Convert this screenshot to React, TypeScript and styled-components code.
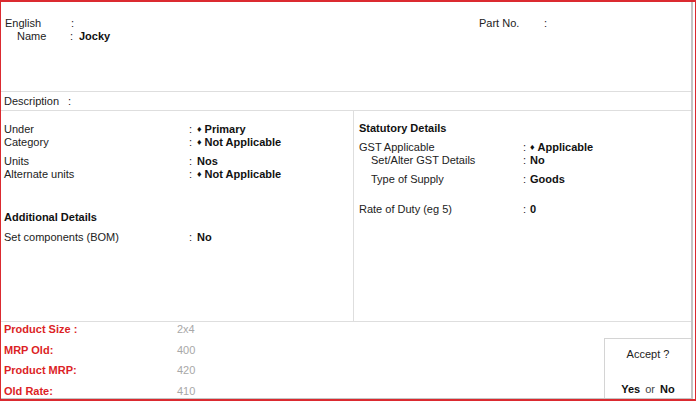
import React from "react";
import styled, { createGlobalStyle } from "styled-components";

const GlobalStyle = createGlobalStyle`
  html, body {
    margin: 0;
    padding: 0;
    background: #ffffff;
  }
  body {
    font-family: "Liberation Sans", Arial, sans-serif;
    font-size: 11px;
    color: #222;
  }
`;

const Frame = styled.div`
  width: 696px;
  height: 401px;
  box-sizing: border-box;
  border-top: 2px solid #db2a30;
  border-left: 1px solid #db2a30;
  border-right: 1px solid #db2a30;
  border-bottom: 2px solid #db2a30;
  display: flex;
  background: #fff;
`;

const Screen = styled.div`
  flex: 1;
  display: flex;
  flex-direction: column;
  border-right: 2px solid #c4c4c4;
  border-bottom: 1px solid #c4c4c4;
  margin-right: 2px;
`;

const Header = styled.div`
  height: 90px;
  box-sizing: border-box;
  padding: 15px 0 0 4px;
  border-bottom: 1px solid #dedede;
  display: flex;
`;

const HeaderLeft = styled.div`
  width: 474px;
  display: flex;
  flex-direction: column;
`;

const Line = styled.div<{ $indent?: number; $top?: number }>`
  display: flex;
  align-items: center;
  height: 13px;
  line-height: 13px;
  padding-left: ${(p) => p.$indent ?? 0}px;
  margin-top: ${(p) => p.$top ?? 0}px;
  white-space: nowrap;
`;

const Label = styled.span<{ $w: number }>`
  width: ${(p) => p.$w}px;
  flex-shrink: 0;
`;

const Colon = styled.span<{ $w?: number }>`
  width: ${(p) => p.$w ?? 8}px;
  flex-shrink: 0;
`;

const Value = styled.span`
  font-weight: bold;
  color: #111;
`;

const Diamond = styled.span`
  font-size: 9px;
  margin-right: 3px;
  position: relative;
  top: -1px;
`;

const DescRow = styled.div`
  height: 19px;
  box-sizing: border-box;
  padding: 3px 0 0 3px;
  border-bottom: 1px solid #dedede;
  display: flex;
`;

const Columns = styled.div`
  height: 210px;
  display: flex;
  border-bottom: 1px solid #dedede;
`;

const LeftCol = styled.div`
  width: 353px;
  box-sizing: border-box;
  padding: 12px 0 0 3px;
  border-right: 1px solid #dedede;
  display: flex;
  flex-direction: column;
`;

const RightCol = styled.div`
  flex: 1;
  padding: 11px 0 0 5px;
  display: flex;
  flex-direction: column;
`;

const SectionTitle = styled.div<{ $top?: number }>`
  font-weight: bold;
  height: 13px;
  line-height: 13px;
  margin-top: ${(p) => p.$top ?? 0}px;
  color: #111;
`;

const Bottom = styled.div`
  flex: 1;
  display: flex;
  justify-content: space-between;
`;

const ExtraList = styled.div`
  padding: 1px 0 0 3px;
  display: flex;
  flex-direction: column;
  gap: 7.6px;
`;

const ExtraRow = styled.div`
  display: flex;
  height: 13px;
  line-height: 13px;
`;

const ExtraLabel = styled.span`
  width: 173px;
  color: #dc1f26;
  font-weight: bold;
`;

const ExtraValue = styled.span`
  color: #a8a8a8;
`;

const AcceptBox = styled.div`
  align-self: flex-end;
  width: 87px;
  height: 60px;
  box-sizing: border-box;
  border-top: 1px solid #d4d4d4;
  border-left: 1px solid #d4d4d4;
  display: flex;
  flex-direction: column;
  align-items: center;
  justify-content: space-between;
  padding: 9px 0 3px;
  color: #222;
`;

const Choice = styled.div`
  word-spacing: 2px;
  b {
    color: #111;
  }
  span {
    color: #444;
  }
`;

const extras = [
  { label: "Product Size :", value: "2x4" },
  { label: "MRP Old:", value: "400" },
  { label: "Product MRP:", value: "420" },
  { label: "Old Rate:", value: "410" },
];

export default function App() {
  return (
    <>
      <GlobalStyle />
      <Frame>
        <Screen>
          <Header>
            <HeaderLeft>
              <Line>
                <Label $w={66}>English</Label>
                <Colon>:</Colon>
              </Line>
              <Line $indent={12}>
                <Label $w={53}>Name</Label>
                <Colon $w={9}>:</Colon>
                <Value>Jocky</Value>
              </Line>
            </HeaderLeft>
            <Line>
              <Label $w={65}>Part No.</Label>
              <Colon>:</Colon>
            </Line>
          </Header>

          <DescRow>
            <Line>
              <Label $w={64}>Description</Label>
              <Colon>:</Colon>
            </Line>
          </DescRow>

          <Columns>
            <LeftCol>
              <Line>
                <Label $w={185}>Under</Label>
                <Colon>:</Colon>
                <Value><Diamond>♦</Diamond>Primary</Value>
              </Line>
              <Line>
                <Label $w={185}>Category</Label>
                <Colon>:</Colon>
                <Value><Diamond>♦</Diamond>Not Applicable</Value>
              </Line>
              <Line $top={6}>
                <Label $w={185}>Units</Label>
                <Colon>:</Colon>
                <Value>Nos</Value>
              </Line>
              <Line>
                <Label $w={185}>Alternate units</Label>
                <Colon>:</Colon>
                <Value><Diamond>♦</Diamond>Not Applicable</Value>
              </Line>
              <SectionTitle $top={30}>Additional Details</SectionTitle>
              <Line $top={7}>
                <Label $w={185}>Set components (BOM)</Label>
                <Colon>:</Colon>
                <Value>No</Value>
              </Line>
            </LeftCol>

            <RightCol>
              <SectionTitle>Statutory Details</SectionTitle>
              <Line $top={6}>
                <Label $w={164}>GST Applicable</Label>
                <Colon $w={7}>:</Colon>
                <Value><Diamond>♦</Diamond>Applicable</Value>
              </Line>
              <Line $indent={12}>
                <Label $w={152}>Set/Alter GST Details</Label>
                <Colon $w={7}>:</Colon>
                <Value>No</Value>
              </Line>
              <Line $indent={12} $top={6}>
                <Label $w={152}>Type of Supply</Label>
                <Colon $w={7}>:</Colon>
                <Value>Goods</Value>
              </Line>
              <Line $top={17}>
                <Label $w={164}>Rate of Duty (eg 5)</Label>
                <Colon $w={7}>:</Colon>
                <Value>0</Value>
              </Line>
            </RightCol>
          </Columns>

          <Bottom>
            <ExtraList>
              {extras.map((e) => (
                <ExtraRow key={e.label}>
                  <ExtraLabel>{e.label}</ExtraLabel>
                  <ExtraValue>{e.value}</ExtraValue>
                </ExtraRow>
              ))}
            </ExtraList>
            <AcceptBox>
              <div>Accept ?</div>
              <Choice>
                <b>Yes</b> <span>or</span> <b>No</b>
              </Choice>
            </AcceptBox>
          </Bottom>
        </Screen>
      </Frame>
    </>
  );
}
